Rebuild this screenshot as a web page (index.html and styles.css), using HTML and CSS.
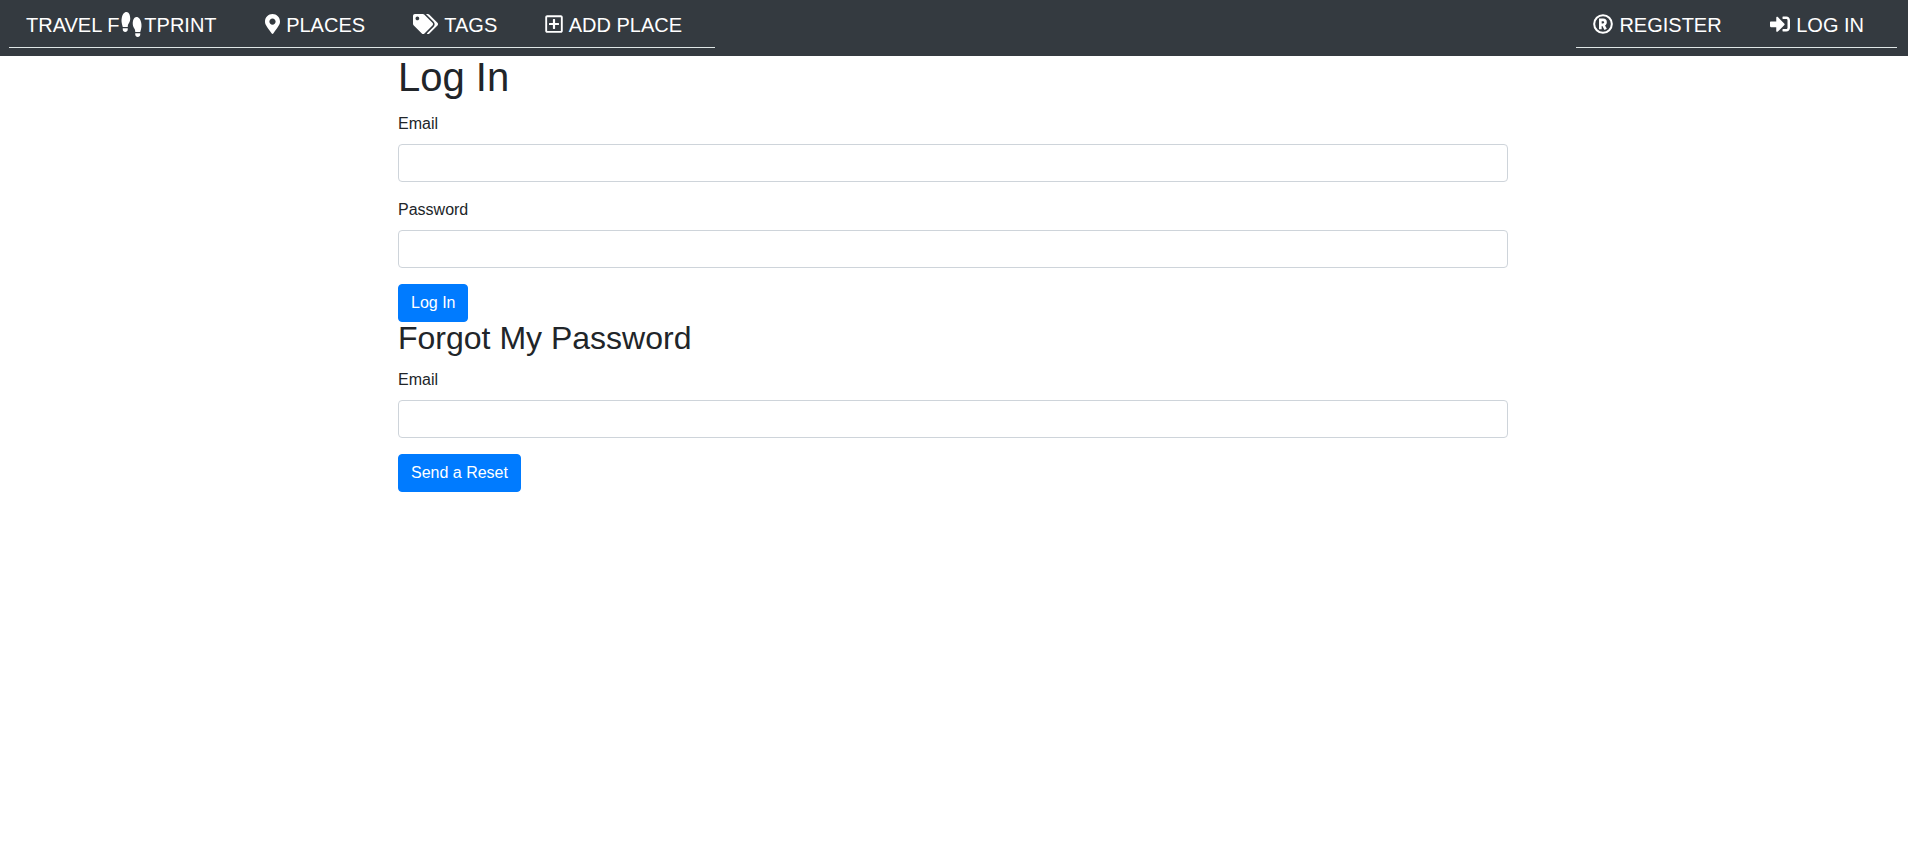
FILE: index.html
```html
<!DOCTYPE html>
<html lang="en">
<head>
<meta charset="utf-8">
<meta name="viewport" content="width=device-width, initial-scale=1">
<title>Travel Footprint</title>
<link rel="stylesheet" href="styles.css">
</head>
<body>
<nav class="navbar">
  <ul class="nav-list">
    <li><a class="nav-link" href="#">TRAVEL F<svg class="icon-steps" viewBox="0 0 640 640" aria-hidden="true"><path transform="translate(64 640) rotate(-90)" d="M192 160h32V32h-32c-35.350 0-64 28.650-64 64s28.650 64 64 64zM0 416c0 35.350 28.650 64 64 64h32V352H64c-35.350 0-64 28.650-64 64zm337.460-128c-34.910 0-76.160 13.120-104.730 32-24.790 16.380-44.520 32-104.730 32v128l57.530 15.970c26.210 7.280 53.010 13.120 80.310 15.050 32.690 2.310 65.600.670 97.580-6.200C472.900 481.300 512 429.220 512 384c0-64-84.180-96-174.540-96zM491.420 7.250C459.440.320 426.530-1.330 393.840.990c-27.300 1.930-54.100 7.770-80.310 15.040L256 32v128c60.200 0 79.940 15.620 104.730 32 28.570 18.880 69.820 32 104.730 32C555.820 224 640 192 640 128c0-45.220-39.100-97.280-148.580-120.750z"/></svg>TPRINT</a></li>
    <li><a class="nav-link" href="#"><svg class="icon icon-pin" viewBox="0 0 384 512" aria-hidden="true"><path d="M172.268 501.670C26.970 291.031 0 269.413 0 192 0 85.961 85.961 0 192 0s192 85.961 192 192c0 77.413-26.970 99.031-172.268 309.670-9.535 13.774-29.930 13.773-39.464 0zM192 272c44.183 0 80-35.817 80-80s-35.817-80-80-80-80 35.817-80 80 35.817 80 80 80z"/></svg> PLACES</a></li>
    <li><a class="nav-link" href="#"><svg class="icon icon-tags" viewBox="0 0 640 512" aria-hidden="true"><path d="M497.941 225.941L286.059 14.059A48 48 0 0 0 252.118 0H48C21.490 0 0 21.490 0 48v204.118a48 48 0 0 0 14.059 33.941l211.882 211.882c18.744 18.745 49.136 18.746 67.882 0l204.118-204.118c18.745-18.745 18.745-49.137 0-67.882zM112 160c-26.510 0-48-21.490-48-48s21.490-48 48-48 48 21.490 48 48-21.490 48-48 48zm513.941 133.823L421.823 497.941c-18.745 18.745-49.137 18.745-67.882 0l-.360-.360L527.640 323.522c16.999-16.999 26.360-39.600 26.360-63.640s-9.362-46.641-26.360-63.640L331.397 0h48.721a48 48 0 0 1 33.941 14.059l211.882 211.882c18.745 18.745 18.745 49.137 0 67.882z"/></svg> TAGS</a></li>
    <li><a class="nav-link" href="#"><svg class="icon icon-plus" viewBox="0 0 448 512" aria-hidden="true"><path d="M352 240v32c0 6.600-5.400 12-12 12h-88v88c0 6.600-5.400 12-12 12h-32c-6.600 0-12-5.400-12-12v-88h-88c-6.600 0-12-5.400-12-12v-32c0-6.600 5.400-12 12-12h88v-88c0-6.600 5.400-12 12-12h32c6.600 0 12 5.400 12 12v88h88c6.600 0 12 5.400 12 12zm96-160v352c0 26.500-21.500 48-48 48H48c-26.500 0-48-21.500-48-48V80c0-26.500 21.500-48 48-48h352c26.500 0 48 21.500 48 48zm-48 346V86c0-3.300-2.700-6-6-6H54c-3.300 0-6 2.700-6 6v340c0 3.300 2.700 6 6 6h340c3.300 0 6-2.700 6-6z"/></svg> ADD PLACE</a></li>
  </ul>
  <ul class="nav-list">
    <li><a class="nav-link" href="#"><svg class="icon icon-square" viewBox="0 0 512 512" aria-hidden="true"><circle class="line-thin" cx="256" cy="256" r="226"/><path class="line-thick" d="M188 392V150h70a56 56 0 0 1 0 124h-70M262 280l62 112"/></svg> REGISTER</a></li>
    <li><a class="nav-link" href="#"><svg class="icon icon-square" viewBox="0 0 512 512" aria-hidden="true"><path d="M416 448h-84c-6.600 0-12-5.400-12-12v-40c0-6.600 5.400-12 12-12h84c17.700 0 32-14.300 32-32V160c0-17.700-14.300-32-32-32h-84c-6.600 0-12-5.400-12-12V76c0-6.600 5.400-12 12-12h84c53 0 96 43 96 96v192c0 53-43 96-96 96zm-47-201L201 79c-15-15-41-4.500-41 17v96H24c-13.300 0-24 10.700-24 24v96c0 13.300 10.700 24 24 24h136v96c0 21.500 26 32 41 17l168-168c9.300-9.400 9.300-24.600 0-34z"/></svg> LOG IN</a></li>
  </ul>
</nav>
<main class="container">
  <h1>Log In</h1>
  <form>
    <div class="form-group">
      <label for="login-email">Email</label>
      <input class="form-control" type="email" id="login-email">
    </div>
    <div class="form-group">
      <label for="login-password">Password</label>
      <input class="form-control" type="password" id="login-password">
    </div>
    <button class="btn" type="submit">Log In</button>
  </form>
  <h2>Forgot My Password</h2>
  <form>
    <div class="form-group">
      <label for="reset-email">Email</label>
      <input class="form-control" type="email" id="reset-email">
    </div>
    <button class="btn" type="submit">Send a Reset</button>
  </form>
</main>
</body>
</html>
```
FILE: styles.css
```css
*, *::before, *::after {
  box-sizing: border-box;
}

body {
  margin: 0;
  font-family: "Liberation Sans", Arial, sans-serif;
  font-size: 16px;
  line-height: 24px;
  color: #212529;
  background: #fff;
}

.navbar {
  display: flex;
  justify-content: space-between;
  padding: 8px 11px 8px 9px;
  background: #343a40;
}

.nav-list {
  display: flex;
  gap: 16px;
  margin: 0;
  padding: 0 17px 0 1px;
  list-style: none;
  border-bottom: 1px solid #dfe6e6;
}

.nav-link {
  display: block;
  padding: 2px 16px 7px;
  font-size: 20px;
  line-height: 30px;
  color: #fff;
  text-decoration: none;
  white-space: nowrap;
}

.icon {
  height: 20px;
  margin-right: 1px;
  fill: currentColor;
  vertical-align: -2px;
}

.icon-steps {
  width: 25px;
  height: 25px;
  fill: currentColor;
  vertical-align: -5px;
}

.icon-pin { width: 15px; }
.icon-tags { width: 25px; }
.icon-plus { width: 18px; }
.icon-square { width: 20px; }

.line-thin,
.line-thick {
  fill: none;
  stroke: currentColor;
  stroke-width: 52px;
}

.line-thick {
  stroke-width: 68px;
}

.container {
  max-width: 1140px;
  margin: 0 auto;
  padding: 0 16px 0 14px;
}

h1, h2 {
  margin: 0 0 14px;
  font-weight: 500;
}

h1 {
  font-size: 40px;
  line-height: 42px;
}

h2 {
  font-size: 32px;
  line-height: 32px;
}

.form-group {
  margin-bottom: 16px;
}

label {
  display: block;
  margin-bottom: 8px;
}

.form-control {
  display: block;
  width: 100%;
  height: 38px;
  padding: 6px 12px;
  font: inherit;
  color: #495057;
  background: #fff;
  border: 1px solid #ced4da;
  border-radius: 4px;
}

.btn {
  display: block;
  padding: 6px 12px;
  font: inherit;
  color: #fff;
  background: #007bff;
  border: 1px solid #007bff;
  border-radius: 4px;
  cursor: pointer;
}
```
